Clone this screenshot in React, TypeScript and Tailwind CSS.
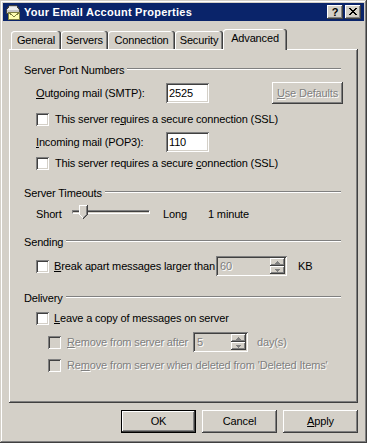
import React from "react";

const raised =
  "shadow-[inset_-1px_-1px_0_#404040,inset_1px_1px_0_#ffffff,inset_-2px_-2px_0_#808080,inset_2px_2px_0_#d4d0c8]";
const sunken =
  "shadow-[inset_1px_1px_0_#808080,inset_-1px_-1px_0_#ffffff,inset_2px_2px_0_#404040,inset_-2px_-2px_0_#d4d0c8]";
const disabledText = "text-[#808080] [text-shadow:1px_1px_0_#ffffff]";

function U({ children }: { children: React.ReactNode }) {
  return <span className="underline underline-offset-[1px] decoration-1">{children}</span>;
}

function Check({ disabled }: { disabled?: boolean }) {
  return (
    <div
      className={`w-[13px] h-[13px] shrink-0 ${sunken} ${disabled ? "bg-[#d4d0c8]" : "bg-white"}`}
    />
  );
}

function Group({ label }: { label: string }) {
  return (
    <div className="flex items-center h-[14px]">
      <span className="whitespace-nowrap leading-[14px]">{label}</span>
      <div className="flex-1 ml-[3px] mr-[2px] mb-[2px] h-[2px] border-t border-t-[#808080] border-b border-b-white" />
    </div>
  );
}

function Arrow({ up }: { up?: boolean }) {
  return (
    <svg width="5" height="3" viewBox="0 0 5 3" shapeRendering="crispEdges">
      {up ? (
        <path d="M2 0h1v1H2zM1 1h3v1H1zM0 2h5v1H0z" fill="#808080" />
      ) : (
        <path d="M0 0h5v1H0zM1 1h3v1H1zM2 2h1v1H2z" fill="#808080" />
      )}
    </svg>
  );
}

function Spin({ value, width }: { value: string; width: string }) {
  return (
    <div className={`${width} h-[20px] shrink-0 bg-[#d4d0c8] ${sunken} p-[2px] flex`}>
      <div className={`flex-1 pl-[2px] leading-[16px] ${disabledText}`}>{value}</div>
      <div className="w-[15px] flex flex-col">
        <div className={`h-[8px] bg-[#d4d0c8] ${raised} flex items-center justify-center`}>
          <Arrow up />
        </div>
        <div className={`h-[8px] bg-[#d4d0c8] ${raised} flex items-center justify-center`}>
          <Arrow />
        </div>
      </div>
    </div>
  );
}

function TitleIcon() {
  return (
    <svg width="16" height="16" viewBox="0 0 16 16" shapeRendering="crispEdges">
      <path d="M1.5 5.5 L4.5 1.5 H11.5 L14.5 5.5 V9.5 H1.5 Z" fill="#c8c8c8" stroke="#404040" />
      <path d="M2.5 5.5 L5 2.5 H11 L13.5 5.5 Z" fill="#ececec" />
      <rect x="3.5" y="8.5" width="11" height="7" fill="#ffffb0" stroke="#808040" />
      <path d="M3.5 8.5 L9 12.5 L14.5 8.5" fill="none" stroke="#808040" />
    </svg>
  );
}

function Tab({ label, w, active }: { label: string; w: string; active?: boolean }) {
  return (
    <div
      className={`${w} ${
        active ? "h-[21px] relative top-[1px] z-10 pb-[2px]" : "h-[18px] pt-[1px]"
      } bg-[#d4d0c8] rounded-t-[3px] shadow-[inset_-1px_0_0_#404040,inset_-2px_0_0_#808080,inset_1px_1px_0_#ffffff] flex items-center justify-center shrink-0`}
    >
      {label}
    </div>
  );
}

export default function App() {
  return (
    <div className="w-[367px] h-[443px] bg-[#d4d0c8] p-[3px] flex flex-col shadow-[inset_-1px_-1px_0_#404040,inset_1px_1px_0_#d4d0c8,inset_-2px_-2px_0_#808080,inset_2px_2px_0_#ffffff] font-['Liberation_Sans',Arial,sans-serif] text-[11px] tracking-[-0.15px] text-black leading-[13px] overflow-hidden">
      {/* Title bar */}
      <div className="h-[18px] bg-[#0a246a] flex items-center pl-[2px] pr-[3px] shrink-0">
        <TitleIcon />
        <span className="ml-[3px] text-white font-bold text-[11px] tracking-[0.25px] whitespace-nowrap">
          Your Email Account Properties
        </span>
        <div className="ml-auto flex gap-[2px]">
          <div className={`w-[16px] h-[14px] bg-[#d4d0c8] ${raised} flex items-center justify-center font-bold text-[11px] leading-[14px] pb-[1px]`}>
            ?
          </div>
          <div className={`w-[16px] h-[14px] bg-[#d4d0c8] ${raised} flex items-center justify-center pb-[1px]`}>
            <svg width="8" height="7" viewBox="0 0 8 7" shapeRendering="crispEdges">
              <path
                d="M0 0h2v1H0zM6 0h2v1H6zM1 1h2v1H1zM5 1h2v1H5zM2 2h4v1H2zM3 3h2v1H3zM2 4h4v1H2zM1 5h2v1H1zM5 5h2v1H5zM0 6h2v1H0zM6 6h2v1H6z"
                fill="#000"
              />
            </svg>
          </div>
        </div>
      </div>

      <div className="px-[6px] flex flex-col">
        {/* Tabs */}
        <div className="mt-[8px] h-[20px] flex items-end pl-[2px]">
          <Tab label="General" w="w-[50px]" />
          <Tab label="Servers" w="w-[47px]" />
          <Tab label="Connection" w="w-[67px]" />
          <Tab label="Security" w="w-[48px]" />
          <Tab label="Advanced" w="w-[64px]" active />
        </div>

        {/* Panel */}
        <div className="h-[354px] bg-[#d4d0c8] shadow-[inset_-1px_-1px_0_#404040,inset_1px_1px_0_#ffffff,inset_-2px_-2px_0_#808080] pl-[15px] pr-[15px] pt-[14px] flex flex-col">
          <Group label="Server Port Numbers" />

          <div className="mt-[5px] h-[22px] flex items-center pl-[12px]">
            <div className="w-[130px] whitespace-nowrap">
              <U>O</U>utgoing mail (SMTP):
            </div>
            <div className={`w-[43px] h-[20px] bg-white ${sunken} pl-[3px] leading-[20px]`}>2525</div>
            <div className={`ml-auto w-[71px] h-[22px] ${raised} flex items-center justify-center ${disabledText}`}>
              <span>
                <U>U</U>se Defaults
              </span>
            </div>
          </div>

          <div className="mt-[8px] h-[15px] flex items-center pl-[12px] gap-[6px]">
            <Check />
            <span className="whitespace-nowrap">
              This server re<U>q</U>uires a secure connection (SSL)
            </span>
          </div>

          <div className="mt-[4px] h-[22px] flex items-center pl-[12px]">
            <div className="w-[130px] whitespace-nowrap">
              <U>I</U>ncoming mail (POP3):
            </div>
            <div className={`w-[43px] h-[20px] bg-white ${sunken} pl-[3px] leading-[20px]`}>110</div>
          </div>

          <div className="mt-[3px] h-[15px] flex items-center pl-[12px] gap-[6px]">
            <Check />
            <span className="whitespace-nowrap">
              This server requires a secure <U>c</U>onnection (SSL)
            </span>
          </div>

          <div className="mt-[15px]">
            <Group label="Server Timeouts" />
          </div>

          <div className="mt-[5px] h-[18px] flex items-center pl-[12px]">
            <div className="w-[36px]">Short</div>
            <div className="w-[78px] h-[18px] relative">
              <div className="absolute left-0 right-0 top-[5px] h-[4px] border-t border-t-[#808080] border-l border-l-[#808080] border-b border-b-white border-r border-r-white bg-[#404040] shadow-[inset_0_-1px_0_#d4d0c8]" />
              <svg
                className="absolute left-[7px] top-0"
                width="9"
                height="14"
                viewBox="0 0 9 14"
                shapeRendering="crispEdges"
              >
                <path d="M0 0H9V9L4.5 13.5L0 9Z" fill="#d4d0c8" />
                <path d="M0 0h8v1H1v9H0z" fill="#ffffff" />
                <path d="M1 10h1v1H1zM2 11h1v1H2zM3 12h1v1H3z" fill="#ffffff" />
                <path d="M8 0h1v10H8zM7 10h1v1H7zM6 11h1v1H6zM5 12h1v1H5zM4 13h1v1H4z" fill="#404040" />
                <path d="M7 1h1v9H7zM6 10h1v1H6zM5 11h1v1H5zM4 12h1v1H4z" fill="#808080" />
              </svg>
            </div>
            <div className="ml-[13px] w-[45px]">Long</div>
            <div>1 minute</div>
          </div>

          <div className="mt-[12px]">
            <Group label="Sending" />
          </div>

          <div className="mt-[7px] h-[20px] flex items-center pl-[12px]">
            <Check />
            <div className="ml-[5px] w-[162px] whitespace-nowrap">
              <U>B</U>reak apart messages larger than
            </div>
            <Spin value="60" width="w-[71px]" />
            <div className="ml-[11px]">KB</div>
          </div>

          <div className="mt-[15px]">
            <Group label="Delivery" />
          </div>

          <div className="mt-[6px] h-[15px] flex items-center pl-[12px] gap-[5px]">
            <Check />
            <span className="whitespace-nowrap">
              <U>L</U>eave a copy of messages on server
            </span>
          </div>

          <div className="mt-[6px] h-[20px] flex items-center pl-[24px]">
            <Check disabled />
            <div className={`ml-[6px] w-[126px] whitespace-nowrap ${disabledText}`}>
              <U>R</U>emove from server after
            </div>
            <Spin value="5" width="w-[55px]" />
            <div className={`ml-[9px] ${disabledText}`}>day(s)</div>
          </div>

          <div className="mt-[6px] h-[15px] flex items-center pl-[24px] gap-[6px]">
            <Check disabled />
            <span className={`whitespace-nowrap ${disabledText}`}>
              Re<U>m</U>ove from server when deleted from 'Deleted Items'
            </span>
          </div>
        </div>

        {/* Buttons */}
        <div className="mt-[7px] flex justify-end gap-[6px]">
          <div className="w-[75px] h-[23px] border border-black">
            <div className={`w-full h-full ${raised} flex items-center justify-center`}>OK</div>
          </div>
          <div className={`w-[75px] h-[23px] ${raised} flex items-center justify-center`}>Cancel</div>
          <div className={`w-[75px] h-[23px] ${raised} flex items-center justify-center`}>
            <span>
              <U>A</U>pply
            </span>
          </div>
        </div>
      </div>
    </div>
  );
}
